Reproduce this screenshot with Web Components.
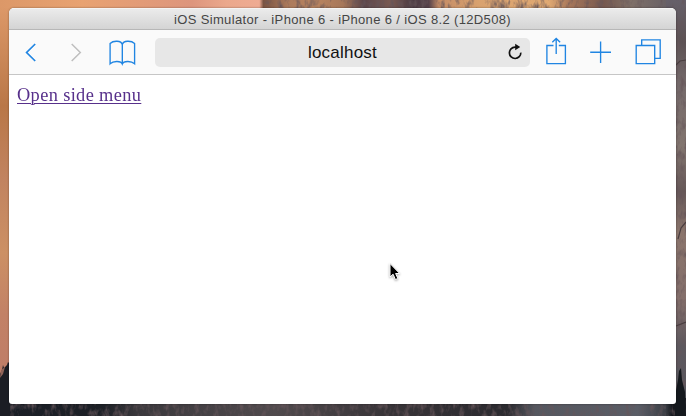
<!DOCTYPE html>
<html lang="en">
<head>
<meta charset="utf-8">
<title>iOS Simulator</title>
<style>
html,body{margin:0;width:686px;height:416px;overflow:hidden}
</style>
</head>
<body>
<desk-top>
  <sim-window>
    <title-bar slot="title">iOS Simulator - iPhone 6 - iPhone 6 / iOS 8.2 (12D508)</title-bar>
    <browser-bar slot="bar">localhost</browser-bar>
    <page-link>Open side menu</page-link>
  </sim-window>
  <mouse-pointer slot="pointer"></mouse-pointer>
</desk-top>
<script>
const define = (name, html) => customElements.define(name, class extends HTMLElement {
  constructor() {
    super();
    this.attachShadow({mode: 'open'}).innerHTML = html;
  }
});

define('desk-top', `
<style>
:host{display:grid;position:relative;box-sizing:border-box;width:686px;height:416px;padding:8px 10px 12px 9px;overflow:hidden;background:#c98761}
.wall{position:absolute;inset:0}
</style>
<svg class="wall" width="686" height="416" viewBox="0 0 686 416">
  <defs>
    <linearGradient id="top" x1="0" x2="686" y1="0" y2="0" gradientUnits="userSpaceOnUse">
      <stop offset="0" stop-color="#dc9868"/><stop offset=".12" stop-color="#e8a271"/><stop offset=".28" stop-color="#dd957d"/><stop offset=".33" stop-color="#eba88c"/><stop offset=".378" stop-color="#efab93"/>
      <stop offset=".384" stop-color="#7a5341"/><stop offset=".42" stop-color="#ab7a5c"/><stop offset=".46" stop-color="#b9845f"/><stop offset=".5" stop-color="#a6775a"/><stop offset=".53" stop-color="#5b454a"/><stop offset=".57" stop-color="#7a5a52"/><stop offset=".6" stop-color="#4a3a42"/><stop offset=".625" stop-color="#55414a"/><stop offset=".64" stop-color="#c58c66"/><stop offset=".7" stop-color="#d9a26f"/><stop offset=".8" stop-color="#e0a972"/><stop offset=".83" stop-color="#a6765a"/><stop offset=".88" stop-color="#76584e"/><stop offset=".92" stop-color="#7f7068"/><stop offset=".96" stop-color="#6d6466"/><stop offset="1" stop-color="#5d5860"/>
    </linearGradient>
    <linearGradient id="left" x2="0" y2="1">
      <stop offset="0" stop-color="#dc9868"/><stop offset=".24" stop-color="#b97747"/><stop offset=".42" stop-color="#c18360"/><stop offset=".6" stop-color="#cc9064"/><stop offset=".75" stop-color="#c28166"/><stop offset="1" stop-color="#bd7b69"/>
    </linearGradient>
    <linearGradient id="right" x2="0" y2="1">
      <stop offset="0" stop-color="#66606a"/><stop offset=".1" stop-color="#5c5254"/><stop offset=".2" stop-color="#74696a"/><stop offset=".35" stop-color="#82756f"/><stop offset=".46" stop-color="#665858"/><stop offset=".56" stop-color="#8b756c"/><stop offset=".72" stop-color="#846f6b"/><stop offset=".83" stop-color="#5d585e"/><stop offset="1" stop-color="#54565d"/>
    </linearGradient>
    <linearGradient id="bottom">
      <stop offset="0" stop-color="#1a1e26"/><stop offset=".15" stop-color="#1d2026"/><stop offset=".2" stop-color="#3a383c"/><stop offset=".4" stop-color="#504a4d"/><stop offset=".56" stop-color="#383438"/><stop offset=".74" stop-color="#2b2a2f"/><stop offset=".78" stop-color="#55575f"/><stop offset=".93" stop-color="#5a5d66"/><stop offset=".97" stop-color="#3b3e45"/><stop offset=".98" stop-color="#14171c"/><stop offset="1" stop-color="#1b1e24"/>
    </linearGradient>
    <filter id="rock" x="0" y="0" width="100%" height="100%">
      <feTurbulence type="fractalNoise" baseFrequency=".2 .1" numOctaves="3" seed="8"/>
      <feColorMatrix values="0 0 0 0 .13  0 0 0 0 .09  0 0 0 0 .1  2.2 0 0 0 -1.02"/>
    </filter>
  </defs>
  <rect width="686" height="30" fill="url(#top)"/>
  <rect y="8" width="20" height="408" fill="url(#left)"/>
  <rect x="666" width="20" height="416" fill="url(#right)"/>
  <rect y="398" width="686" height="18" fill="url(#bottom)"/>
  <path d="M0 374l2-4 1-5 1 3 3-3 1-3 2 2v52H0z" fill="#1b1d24"/>
  <path d="M1 370l4-3-2 7-3 4z" fill="#8f6358"/>
  <rect x="262" width="424" height="9" filter="url(#rock)"/>
  <rect x="675" y="9" width="11" height="394" filter="url(#rock)"/>
  <rect x="10" y="403" width="676" height="13" filter="url(#rock)"/>
  <path d="M676 65l4-4 6-1M678 239l3-11 5-6M676 326l10-4" stroke="#4a3e40" stroke-width="1.2" fill="none"/>
  <path d="M675 396l3-16 1-9 2-3 1 12 3 12 1 24h-11z" fill="#14181d"/>
</svg>
<slot></slot><slot name="pointer"></slot>`);

define('sim-window', `
<style>
:host{position:relative;display:flex;flex-direction:column;border-radius:5px 5px 3px 3px;overflow:hidden;background:#fff;box-shadow:0 0 2px #0007}
main{flex:1;padding:10px 8px}
</style>
<slot name="title"></slot><slot name="bar"></slot><main><slot></slot></main>`);

define('title-bar', `
<style>
:host{display:flex;justify-content:center;box-sizing:border-box;height:22px;border-top:1px solid #f4f4f4;border-bottom:1px solid #b7b7b7;background:linear-gradient(#ebebeb,#d4d4d4);font:13px/21px "Liberation Sans",Arial,sans-serif;letter-spacing:.355px;color:#454545;white-space:nowrap}
</style>
<span><slot></slot></span>`);

define('browser-bar', `
<style>
:host{display:flex;box-sizing:border-box;height:45px;border-bottom:1px solid #c6c6c6;background:#fafafa}
svg{display:block;flex:none;fill:none;stroke:#2085e2;stroke-width:1.35}
.field{display:grid;grid-template-columns:30px 1fr 30px;box-sizing:border-box;width:375px;height:29px;margin-top:8px;border-radius:5px;background:#e7e7e7;font:17px/29px "Liberation Sans",Arial,sans-serif;letter-spacing:.22px;color:#111}
.field span{grid-column:2;text-align:center}
</style>
<svg width="146" height="44" viewBox="9 30 146 44">
  <path d="M35.2 44L26.6 52.5 35.2 61" stroke-width="1.7"/>
  <path d="M71.7 44L80.3 52.5 71.7 61" stroke="#bfbfbf" stroke-width="1.5"/>
  <path d="M122.3 44.5c-1-4.200-9-4.200-12.200-1v20.300c3.400-3.300 11-3 12.200.3 1.200-3.300 8.800-3.600 12.300-.3V43.500c-3.400-3.200-11.300-3.200-12.300 1v19.600"/>
</svg>
<div class="field"><span><slot></slot></span>
  <svg width="30" height="29" viewBox="500 38 30 29"><path d="M516.6 47.1H515a5.700 5.700 0 1 0 5.800 5.500" stroke="#111" stroke-width="1.7"/><path d="M515.2 43.700l5 3.400-5 3.200z" fill="#111" stroke="none"/></svg>
</div>
<svg width="146" height="44" viewBox="530 30 146 44">
  <path d="M553.5 45.5h-6.600v18.100h18.500V45.500h-6.600M556.200 54V38.800M552.300 42.300l3.900-3.900 3.900 3.900"/>
  <path d="M600.6 41.500v21.400M590.200 52.200H611"/>
  <path d="M636.2 45.500h18.500v18.100h-18.500zM641.700 45v-5.200h18.500v18.500h-5"/>
</svg>`);

define('page-link', `
<style>
:host{display:block;font:18px/20px "Liberation Serif","Times New Roman",serif}
a{display:inline-block;color:#57308b;text-decoration:underline;text-decoration-thickness:1px;text-underline-offset:2px;letter-spacing:.35px;transform:scaleX(1.02);transform-origin:0 0;white-space:nowrap}
</style>
<a href="#"><slot></slot></a>`);

define('mouse-pointer', `
<style>:host{position:absolute;left:387px;top:260px}svg{display:block;filter:drop-shadow(0 1px 1px #0005)}</style>
<svg width="16" height="24" viewBox="0 0 16 24"><path d="M3 3.5V17l3.100-2.800 2.300 5.300 2.500-1-2.300-5h4.100z" fill="#000" stroke="#fff"/></svg>`);
</script>
</body>
</html>
